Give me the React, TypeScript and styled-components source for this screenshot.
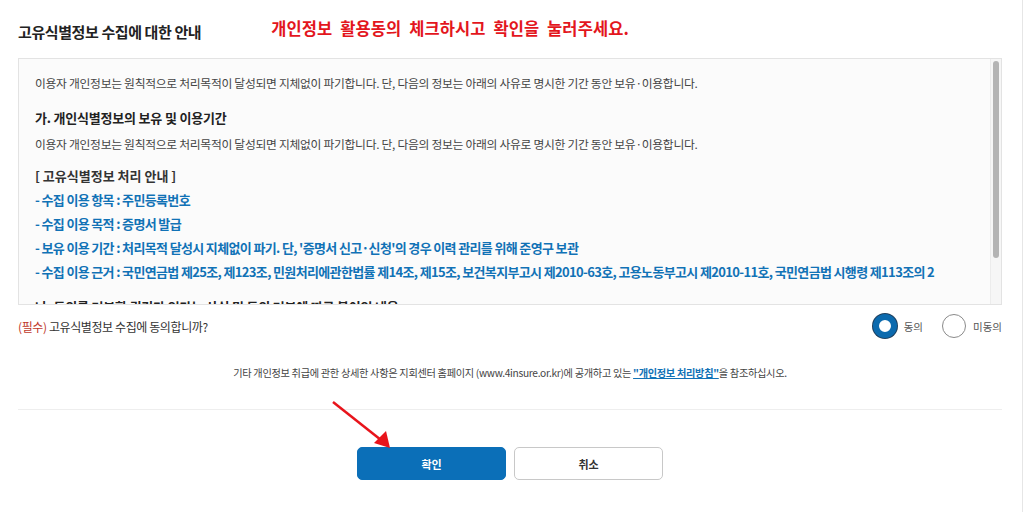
import React, { useState } from "react";
import styled, { createGlobalStyle } from "styled-components";

const GlobalStyle = createGlobalStyle`
  html, body {
    margin: 0;
    padding: 0;
    background: #ffffff;
  }
  body {
    font-family: "Noto Sans CJK KR", "Noto Sans", sans-serif;
    color: #333;
  }
`;

const Page = styled.div`
  position: relative;
  width: 1023px;
  height: 512px;
  box-sizing: border-box;
  border-right: 1px solid #e6e6e6;
  padding: 0 20px 0 18px;
  overflow: hidden;
`;

const Header = styled.div`
  display: flex;
  align-items: flex-start;
  gap: 70px;
  height: 58px;
`;

const Title = styled.h2`
  margin: 0;
  padding-top: 20px;
  font-size: 15px;
  line-height: 24px;
  font-weight: 700;
  letter-spacing: -0.4px;
  color: #222;
`;

const Notice = styled.div`
  padding-top: 16px;
  font-size: 16.5px;
  line-height: 24px;
  font-weight: 700;
  color: #e3161d;
  word-spacing: 4px;
  letter-spacing: 0.1px;
`;

const TermsBox = styled.div`
  display: flex;
  height: 247px;
  box-sizing: border-box;
  border: 1px solid #e3e3e3;
  background: #fbfbfb;
  overflow: hidden;
`;

const TermsContent = styled.div`
  flex: 1;
  padding: 14px 16px 0 16px;
`;

const Paragraph = styled.p`
  margin: 0;
  font-size: 11.8px;
  line-height: 20px;
  letter-spacing: -0.3px;
  color: #444;
`;

const SectionTitle = styled.h3<{ $top: number }>`
  margin: ${(p) => p.$top}px 0 6px;
  font-size: 13px;
  line-height: 20px;
  font-weight: 700;
  letter-spacing: -0.2px;
  color: #222;
`;

const InfoTitle = styled.div`
  margin-top: 10px;
  font-size: 13px;
  line-height: 24px;
  font-weight: 700;
  letter-spacing: 0;
  color: #333;
`;

const InfoLine = styled.div`
  font-size: 13px;
  line-height: 24px;
  font-weight: 700;
  letter-spacing: -0.65px;
  color: #1172b6;
  white-space: nowrap;
`;

const ScrollTrack = styled.div`
  width: 11px;
  border-left: 1px solid #ececec;
  background: #f6f6f6;
  padding: 2px 2px 0 2px;
  box-sizing: border-box;
`;

const ScrollThumb = styled.div`
  height: 197px;
  width: 6px;
  border-radius: 3px;
  background: #b4b4b4;
`;

const ConsentRow = styled.div`
  display: flex;
  align-items: center;
  justify-content: space-between;
  height: 42px;
`;

const ConsentQuestion = styled.div`
  font-size: 12px;
  letter-spacing: -0.4px;
  color: #333;
`;

const Required = styled.span`
  color: #c0392b;
`;

const RadioGroup = styled.div`
  display: flex;
  align-items: center;
  gap: 19px;
`;

const RadioLabel = styled.label`
  display: flex;
  align-items: center;
  gap: 7px;
  font-size: 10.5px;
  color: #555;
  cursor: pointer;
`;

const RadioCircle = styled.span<{ $checked: boolean }>`
  width: 24px;
  height: 24px;
  box-sizing: border-box;
  border-radius: 50%;
  background: #fff;
  border: ${(p) => (p.$checked ? "6px solid #0b6aae" : "1px solid #8a8a8a")};
  box-shadow: ${(p) => (p.$checked ? "0 0 0 1px #1d3f5e" : "none")};
`;

const Note = styled.p`
  margin: 16px 0 0;
  text-align: center;
  font-size: 10.2px;
  line-height: 20px;
  letter-spacing: -0.3px;
  color: #444;
`;

const NoteLink = styled.a`
  color: #1172b6;
  font-weight: 700;
  text-decoration: underline;
`;

const Divider = styled.hr`
  margin: 26px 0 0;
  border: 0;
  border-top: 1px solid #eeeeee;
`;

const ButtonRow = styled.div`
  display: flex;
  justify-content: center;
  gap: 8px;
  margin-top: 37px;
`;

const Button = styled.button<{ $primary?: boolean }>`
  width: 149px;
  height: 33px;
  border-radius: 5px;
  font-family: inherit;
  font-size: 11px;
  font-weight: 700;
  cursor: pointer;
  background: ${(p) => (p.$primary ? "#0b6fb8" : "#ffffff")};
  color: ${(p) => (p.$primary ? "#ffffff" : "#333333")};
  border: 1px solid ${(p) => (p.$primary ? "#0b6fb8" : "#c8c8c8")};
`;

const Arrow = styled.svg`
  position: absolute;
  left: 0;
  top: 0;
  pointer-events: none;
`;

const infoLines = [
  "- 수집 이용 항목 : 주민등록번호",
  "- 수집 이용 목적 : 증명서 발급",
  "- 보유 이용 기간 : 처리목적 달성시 지체없이 파기. 단, '증명서 신고·신청'의 경우 이력 관리를 위해 준영구 보관",
  "- 수집 이용 근거 : 국민연금법 제25조, 제123조, 민원처리에관한법률 제14조, 제15조, 보건복지부고시 제2010-63호, 고용노동부고시 제2010-11호, 국민연금법 시행령 제113조의 2",
];

const body =
  "이용자 개인정보는 원칙적으로 처리목적이 달성되면 지체없이 파기합니다. 단, 다음의 정보는 아래의 사유로 명시한 기간 동안 보유·이용합니다.";

const App: React.FC = () => {
  const [agree, setAgree] = useState<boolean>(true);

  return (
    <Page>
      <GlobalStyle />
      <Header>
        <Title>고유식별정보 수집에 대한 안내</Title>
        <Notice>개인정보 활용동의 체크하시고 확인을 눌러주세요.</Notice>
      </Header>

      <TermsBox>
        <TermsContent>
          <Paragraph>{body}</Paragraph>
          <SectionTitle $top={15}>가. 개인식별정보의 보유 및 이용기간</SectionTitle>
          <Paragraph>{body}</Paragraph>
          <InfoTitle>[ 고유식별정보 처리 안내 ]</InfoTitle>
          {infoLines.map((line, i) => (
            <InfoLine key={i}>{line}</InfoLine>
          ))}
          <SectionTitle $top={13}>나. 동의를 거부할 권리가 있다는 사실 및 동의 거부에 따른 불이익 내용</SectionTitle>
        </TermsContent>
        <ScrollTrack>
          <ScrollThumb />
        </ScrollTrack>
      </TermsBox>

      <ConsentRow>
        <ConsentQuestion>
          <Required>(필수)</Required> 고유식별정보 수집에 동의합니까?
        </ConsentQuestion>
        <RadioGroup>
          <RadioLabel onClick={() => setAgree(true)}>
            <RadioCircle $checked={agree} />
            동의
          </RadioLabel>
          <RadioLabel onClick={() => setAgree(false)}>
            <RadioCircle $checked={!agree} />
            미동의
          </RadioLabel>
        </RadioGroup>
      </ConsentRow>

      <Note>
        기타 개인정보 취급에 관한 상세한 사항은 지회센터 홈페이지 (www.4insure.or.kr)에 공개하고 있는{" "}
        <NoteLink href="#">"개인정보 처리방침"</NoteLink>을 참조하십시오.
      </Note>

      <Divider />

      <ButtonRow>
        <Button $primary>확인</Button>
        <Button>취소</Button>
      </ButtonRow>

      {/* red annotation arrow pointing at the confirm button */}
      <Arrow width="1024" height="512" viewBox="0 0 1024 512">
        <line x1="333" y1="402" x2="381" y2="440" stroke="#e8141b" strokeWidth="2.5" />
        <polygon points="390,448 374,443 386,431" fill="#e8141b" />
      </Arrow>
    </Page>
  );
};

export default App;
